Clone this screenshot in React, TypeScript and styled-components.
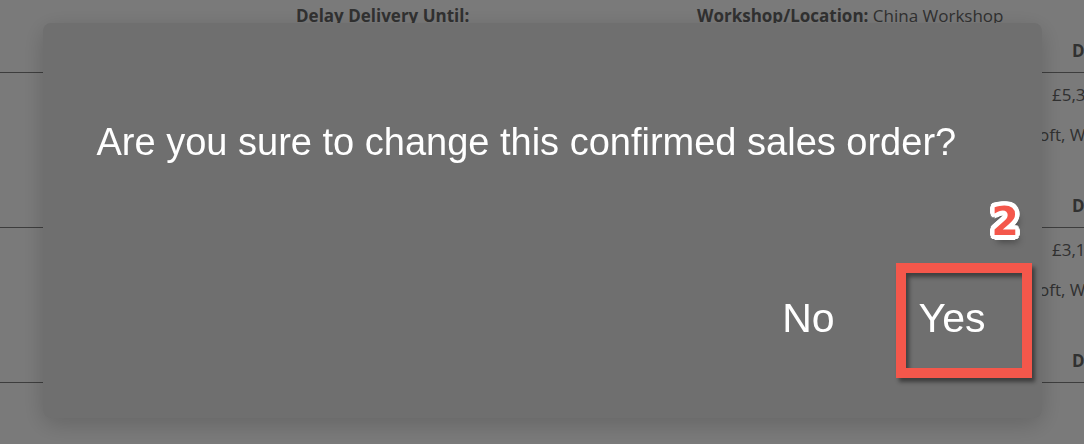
import React from 'react';
import styled, {createGlobalStyle} from 'styled-components';

const GlobalStyle = createGlobalStyle`
  html, body {
    margin: 0;
    padding: 0;
    background: #ffffff;
  }
  body {
    font-family: 'Open Sans', 'Liberation Sans', sans-serif;
    overflow: hidden;
  }
`;

const Page = styled.div`
  width: 1084px;
  height: 444px;
  overflow: hidden;
  padding-top: 5px;
  box-sizing: border-box;
  color: #666;
  font-size: 17px;
  line-height: 22px;
`;

const InfoRow = styled.div`
  display: flex;
  padding-left: 296px;
`;

const InfoField = styled.div<{width: number}>`
  width: ${p => p.width}px;
  white-space: nowrap;
`;

const Label = styled.span`
  font-weight: 700;
`;

const ItemList = styled.div`
  margin-top: 13px;
  margin-left: -70px;
  width: 1300px;
`;

const ItemBlock = styled.div`
  height: 155px;
`;

const Row = styled.div<{head?: boolean}>`
  display: grid;
  grid-template-columns: 1122px 1fr;
  white-space: nowrap;
  ${p =>
    p.head
      ? `
    padding-bottom: 10px;
    border-bottom: 1px solid #808080;
    margin-bottom: 11px;
    font-weight: 700;
  `
      : `
    margin-bottom: 18px;
  `}
`;

const Cell = styled.div<{shift?: number}>`
  margin-left: ${p => p.shift ?? 0}px;
`;

const Backdrop = styled.div`
  position: fixed;
  inset: 0;
  background: rgba(0, 0, 0, 0.52);
  display: flex;
  justify-content: center;
  align-items: flex-start;
  padding-top: 23px;
`;

const Dialog = styled.div`
  width: 999px;
  height: 395px;
  box-sizing: border-box;
  background: #6f6f6f;
  border-radius: 8px;
  box-shadow: 0 6px 24px rgba(0, 0, 0, 0.18);
  padding: 97px 56px 0 54px;
  display: flex;
  flex-direction: column;
  font-family: 'Liberation Sans', Arial, sans-serif;
  color: #ffffff;
`;

const Message = styled.div`
  font-size: 38px;
  line-height: 44px;
  white-space: nowrap;
`;

const Actions = styled.div`
  margin-top: 130px;
  display: flex;
  justify-content: flex-end;
  gap: 84px;
`;

const ActionButton = styled.button`
  background: none;
  border: none;
  padding: 0;
  margin: 0;
  color: #ffffff;
  font-family: inherit;
  font-size: 41px;
  line-height: 48px;
  cursor: pointer;
`;

const Highlighted = styled.div`
  position: relative;
`;

const Marker = styled.div`
  position: absolute;
  left: -23px;
  top: -31px;
  width: 136px;
  height: 115px;
  box-sizing: border-box;
  border: 10px solid #f4574b;
  box-shadow: 3px 4px 4px rgba(0, 0, 0, 0.45),
    inset 3px 4px 4px rgba(0, 0, 0, 0.45);
  pointer-events: none;
`;

// white ring around the digit, then a soft drop shadow
const ring = Array.from({length: 20}, (_, i) => {
  const a = (i / 20) * Math.PI * 2;
  return `${(Math.cos(a) * 4.5).toFixed(1)}px ${(Math.sin(a) * 4.5).toFixed(1)}px 0 #fff`;
}).join(', ');

const StepBadge = styled.span`
  position: absolute;
  right: 3px;
  top: -71px;
  font-family: 'DejaVu Sans', sans-serif;
  font-weight: 700;
  font-size: 39px;
  line-height: 40px;
  color: #f4574b;
  text-shadow: ${ring}, 3px 7px 7px rgba(0, 0, 0, 0.4);
`;

const items = [
  {name: 'Shipping', price: '£5,350.00', place: 'Microsoft, Washington'},
  {name: 'Shipping', price: '£3,120.00', place: 'Microsoft, Washington'},
];

export default function App() {
  return (
    <>
      <GlobalStyle />
      <Page>
        <InfoRow>
          <InfoField width={401}>
            <Label>Delay Delivery Until:</Label>
          </InfoField>
          <InfoField width={360}>
            <Label>Workshop/Location:</Label> China Workshop
          </InfoField>
        </InfoRow>
        <ItemList>
          {items.map((item, i) => (
            <ItemBlock key={i}>
              <Row head>
                <Cell>Service</Cell>
                <Cell shift={20}>Delivery</Cell>
              </Row>
              <Row>
                <Cell>{item.name}</Cell>
                <Cell>{item.price}</Cell>
              </Row>
              <Row>
                <Cell />
                <Cell shift={-66}>{item.place}</Cell>
              </Row>
            </ItemBlock>
          ))}
          <ItemBlock>
            <Row head>
              <Cell />
              <Cell shift={20}>Delivery</Cell>
            </Row>
          </ItemBlock>
        </ItemList>
      </Page>
      <Backdrop>
        <Dialog>
          <Message>Are you sure to change this confirmed sales order?</Message>
          <Actions>
            <ActionButton>No</ActionButton>
            <Highlighted>
              <ActionButton>Yes</ActionButton>
              <Marker>
                <StepBadge>2</StepBadge>
              </Marker>
            </Highlighted>
          </Actions>
        </Dialog>
      </Backdrop>
    </>
  );
}
